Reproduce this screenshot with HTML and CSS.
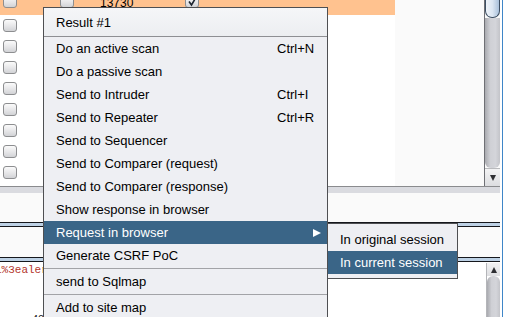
FILE: index.html
```html
<!DOCTYPE html>
<html>
<head>
<meta charset="utf-8">
<link rel="stylesheet" href="styles.css">
</head>
<body>
<div class="screen">
  <div class="main">
    <div class="top">
      <div class="table">
        <div class="row row-first">
          <span class="cb c1"></span>
          <span class="cb c2"></span>
          <span class="num">13730</span>
          <span class="cb c4"><svg width="11" height="11" viewBox="0 0 11 11"><path d="M2 5.5 L4.5 9 L9.5 0.5" fill="none" stroke="#1d2530" stroke-width="1.6"/></svg></span>
        </div>
        <div class="row"><span class="cb c1"></span></div>
        <div class="row"><span class="cb c1"></span></div>
        <div class="row"><span class="cb c1"></span></div>
        <div class="row"><span class="cb c1"></span></div>
        <div class="row"><span class="cb c1"></span></div>
        <div class="row"><span class="cb c1"></span></div>
        <div class="row"><span class="cb c1"></span></div>
        <div class="row"><span class="cb c1"></span></div>
      </div>
      <div class="filler"></div>
      <div class="vscroll">
        <div class="thumb"></div>
        <div class="track"></div>
        <div class="sbtn"><span class="tri-down"></span></div>
      </div>
    </div>
    <div class="band"></div>
    <div class="pane pane-a"></div>
    <div class="splitter"></div>
    <div class="pane pane-b"></div>
    <div class="splitter"></div>
    <div class="bottom">
      <div class="code">
        <div class="code-line">1%3ealert(1)%3c%2fscript%3e</div>
        <div class="lineno">40</div>
      </div>
      <div class="vscroll2">
        <div class="sbtn2"><span class="tri-up"></span></div>
        <div class="track2"></div>
      </div>
    </div>
  </div>
  <div class="edge"><div class="edge-line"></div></div>
</div>

<div class="menu">
  <div class="menu-header">Result #1</div>
  <div class="sep sep-head"></div>
  <div class="item"><span class="label">Do an active scan</span><span class="key">Ctrl+N</span></div>
  <div class="item"><span class="label">Do a passive scan</span></div>
  <div class="item"><span class="label">Send to Intruder</span><span class="key">Ctrl+I</span></div>
  <div class="item"><span class="label">Send to Repeater</span><span class="key">Ctrl+R</span></div>
  <div class="item"><span class="label">Send to Sequencer</span></div>
  <div class="item"><span class="label">Send to Comparer (request)</span></div>
  <div class="item"><span class="label">Send to Comparer (response)</span></div>
  <div class="item"><span class="label">Show response in browser</span></div>
  <div class="item active"><span class="label">Request in browser</span><span class="arrow"></span></div>
  <div class="item"><span class="label">Generate CSRF PoC</span></div>
  <div class="sep"></div>
  <div class="item"><span class="label">send to Sqlmap</span></div>
  <div class="sep"></div>
  <div class="item"><span class="label">Add to site map</span></div>
</div>

<div class="submenu">
  <div class="item"><span class="label">In original session</span></div>
  <div class="item active"><span class="label">In current session</span></div>
</div>
</body>
</html>
```

FILE: styles.css
```css
* { box-sizing: border-box; }
html, body {
  margin: 0;
  padding: 0;
  width: 505px;
  height: 317px;
  overflow: hidden;
  background: #fafafa;
  font-family: "Liberation Sans", Arial, sans-serif;
}
.screen {
  display: flex;
  width: 505px;
  height: 317px;
}
.main {
  width: 500px;
  height: 317px;
  display: flex;
  flex-direction: column;
  overflow: hidden;
}
.top {
  height: 187px;
  flex: none;
  display: flex;
  border-bottom: 1px solid #8a8b8e;
  overflow: hidden;
}
.table {
  width: 395px;
  background: #fff;
  display: flex;
  flex-direction: column;
}
.row {
  height: 21px;
  flex: none;
  display: flex;
  align-items: center;
  font-size: 12px;
  color: #000;
}
.row-first {
  height: 15px;
  align-items: flex-end;
  padding-bottom: 7px;
  background: #ffc28f;
}
.cb {
  width: 14px;
  height: 13px;
  flex: none;
  border: 1px solid #8d8e90;
  border-radius: 3px;
  background: linear-gradient(#fbfbfb, #e6e6e8 55%, #d2d3d6);
  display: flex;
  align-items: center;
  justify-content: center;
}
.c1 { margin-left: 3px; }
.c2 { margin-left: 43px; }
.num { margin-left: 26px; line-height: 12px; margin-bottom: -1px; }
.c4 { margin-left: 52px; }
.filler { flex: 1; background: #fafafa; }
.vscroll {
  width: 16px;
  display: flex;
  flex-direction: column;
  border-left: 1px solid #6f7075;
}
.thumb {
  height: 18px;
  flex: none;
  border: 1px solid #3e5064;
  border-top: none;
  border-radius: 0 0 7px 7px;
  background: linear-gradient(to right, #eef3f9, #dbe6f2 50%, #a9c0da);
}
.track {
  flex: 1;
  background: linear-gradient(to right, #a9aaaf, #cfd0d5 35%, #d4d5da 70%, #c3c4c9);
  border-radius: 0 0 6px 6px;
}
.sbtn {
  height: 18px;
  flex: none;
  background: linear-gradient(#f3f3f4, #dcdde0);
  border-top: 1px solid #b9babd;
  display: flex;
  align-items: center;
  justify-content: center;
}
.tri-down {
  width: 0;
  height: 0;
  border-left: 3.5px solid transparent;
  border-right: 3.5px solid transparent;
  border-top: 6px solid #2e2f33;
}
.band {
  height: 6px;
  flex: none;
  background: #dadbe0;
}
.pane { flex: none; background: #fafafa; }
.pane-a { height: 29px; }
.pane-b { height: 30px; }
.splitter {
  height: 5px;
  flex: none;
  border-top: 1px solid #15171c;
  border-bottom: 1px solid #15171c;
  background: #bdd1e5;
}
.bottom {
  flex: 1;
  min-height: 0;
  display: flex;
  background: #fff;
  overflow: hidden;
}
.code {
  flex: 1;
  overflow: hidden;
}
.code-line {
  font-family: "Liberation Mono", "Courier New", monospace;
  font-size: 11px;
  line-height: 14px;
  padding-top: 1px;
  margin-left: -5px;
  color: #b3342c;
  white-space: nowrap;
}
.lineno {
  margin-top: 36px;
  padding-left: 32px;
  font-size: 11px;
  line-height: 12px;
  color: #222;
}
.vscroll2 {
  width: 14px;
  display: flex;
  flex-direction: column;
  border-left: 1px solid #b4b5b9;
  margin-top: 1px;
}
.sbtn2 {
  height: 13px;
  flex: none;
  background: linear-gradient(#f1f1f2, #dedfe2);
  display: flex;
  align-items: center;
  justify-content: center;
}
.tri-up {
  width: 0;
  height: 0;
  border-left: 3.5px solid transparent;
  border-right: 3.5px solid transparent;
  border-bottom: 6px solid #2e2f33;
}
.track2 {
  flex: 1;
  border-radius: 6px 6px 0 0;
  background: linear-gradient(to right, #a9aaaf, #cfd0d5 35%, #d4d5da 70%, #c3c4c9);
}
.edge {
  width: 5px;
  background: #fff;
  padding-left: 2px;
}
.edge-line {
  width: 1px;
  height: 100%;
  background: #3f86c8;
}

/* Popup menu */
.menu {
  position: absolute;
  left: 43px;
  top: 7px;
  width: 285px;
  background: #eeeff3;
  border: 1px solid #4e4f52;
  font-size: 13px;
  color: #000;
}
.menu-header {
  height: 28px;
  padding: 2px 0 0 12px;
  line-height: 26px;
  background: linear-gradient(#f5f6f8, #eceef1);
}
.sep {
  height: 1px;
  margin: 1px 0;
  background: #a2a3a7;
}
.sep-head { margin: 0; background: #8e8f93; }
.item {
  height: 23px;
  line-height: 23px;
  padding-left: 12px;
  display: flex;
  align-items: center;
  white-space: nowrap;
}
.label { width: 221px; flex: none; }
.key { flex: none; }
.item.active {
  background: #3a6587;
  color: #fff;
}
.arrow {
  margin-left: auto;
  margin-right: 6px;
  width: 0;
  height: 0;
  border-top: 4px solid transparent;
  border-bottom: 4px solid transparent;
  border-left: 8px solid #fff;
}
.submenu {
  position: absolute;
  left: 327px;
  top: 223px;
  width: 131px;
  padding: 4px 0;
  background: #eeeff3;
  border: 1px solid #4e4f52;
  font-size: 13px;
  color: #000;
}
.submenu .label { width: auto; }
```
